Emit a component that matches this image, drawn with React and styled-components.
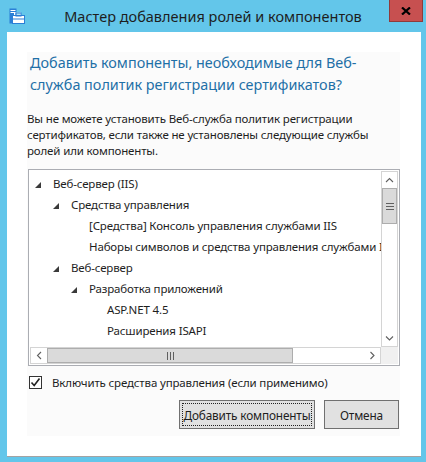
import React from "react";
import styled, { createGlobalStyle } from "styled-components";

const Global = createGlobalStyle`
  html, body { margin: 0; padding: 0; }
  body { background: #63c6ea; font-family: "Noto Sans", "Segoe UI", sans-serif; }
`;

const FONT = `"Noto Sans", "Segoe UI", sans-serif`;

const Window = styled.div`
  width: 426px;
  height: 462px;
  background: #63c6ea;
  display: flex;
  flex-direction: column;
  box-sizing: border-box;
`;

const TitleBar = styled.div`
  height: 32px;
  display: grid;
  grid-template-columns: 1fr auto 1fr;
  align-items: center;
  flex: none;
`;

const TitleIcon = styled.div`
  justify-self: start;
  align-self: start;
  margin: 8px 0 0 9px;
  width: 17px;
  height: 17px;
`;

const TitleText = styled.div`
  font-family: ${FONT};
  font-size: 14.5px;
  color: #1e1e1e;
  white-space: nowrap;
`;

const CloseButton = styled.div`
  justify-self: end;
  align-self: start;
  margin-right: 3px;
  width: 34px;
  height: 22px;
  box-sizing: border-box;
  background: #c75050;
  border: 1px solid #8f3b3b;
  border-top: none;
  display: flex;
  align-items: center;
  justify-content: center;
`;

const Client = styled.div`
  margin: 0 5px 0 7px;
  height: 425px;
  box-sizing: border-box;
  background: #ffffff;
  border-bottom: 1px solid #a3a3a3;
  padding: 20px 21px 0 20px;
  flex: none;
`;

const Panel = styled.div`
  width: 373px;
  height: 384px;
  background: #fbfbfb;
  display: flex;
  flex-direction: column;
  font-family: ${FONT};
  color: #1e1e1e;
  font-size: 11.5px;
  letter-spacing: -0.15px;
`;

const Heading = styled.h1`
  margin: 0;
  padding-left: 3px;
  font-weight: normal;
  font-size: 14.4px;
  letter-spacing: 0;
  line-height: 22px;
  color: #1f70a7;
`;

const Paragraph = styled.p`
  margin: 15px 0 0 0;
  font-size: 11.5px;
  line-height: 16px;
`;

const TreeBox = styled.div`
  margin: 10px 0 0 1px;
  width: 372px;
  height: 197px;
  box-sizing: border-box;
  border: 1px solid #abadb3;
  padding: 1px;
  background: #fff;
  display: grid;
  grid-template-columns: 351px 17px;
  grid-template-rows: 176px 17px;
`;

const TreeContent = styled.div`
  overflow: hidden;
  padding-top: 2px;
  box-sizing: border-box;
`;

const Row = styled.div`
  height: 21px;
  display: flex;
  align-items: center;
  padding-left: ${(p) => 5 + p.$level * 18}px;
  font-size: 11.5px;
  white-space: nowrap;
  color: #1e1e1e;
`;

const Expander = styled.span`
  width: 18px;
  flex: none;
  display: flex;
  align-items: center;
  padding-top: 2px;
`;

const VScroll = styled.div`
  display: flex;
  flex-direction: column;
  border: 1px solid #d4d4d4;
  box-sizing: border-box;
  background: #fff;
`;

const HScroll = styled.div`
  display: flex;
  flex-direction: row;
  border: 1px solid #d4d4d4;
  box-sizing: border-box;
  background: #fff;
`;

const ArrowButton = styled.div`
  flex: none;
  width: ${(p) => (p.$horizontal ? "16px" : "auto")};
  height: ${(p) => (p.$horizontal ? "auto" : "16px")};
  display: flex;
  align-items: center;
  justify-content: center;
`;

const Thumb = styled.div`
  flex: none;
  box-sizing: border-box;
  background: #dadada;
  border: 1px solid #adadad;
  width: ${(p) => (p.$horizontal ? `${p.$size}px` : "auto")};
  height: ${(p) => (p.$horizontal ? "auto" : `${p.$size}px`)};
  display: flex;
  align-items: center;
  justify-content: center;
`;

const Track = styled.div`
  flex: 1;
`;

const Corner = styled.div`
  background: #f0f0f0;
`;

const CheckRow = styled.label`
  margin: 8px 0 0 2px;
  height: 16px;
  display: flex;
  align-items: center;
  gap: 10px;
  font-size: 11.5px;
`;

const CheckBox = styled.span`
  width: 13px;
  height: 13px;
  box-sizing: border-box;
  border: 1px solid #333;
  background: #fff;
  display: flex;
  align-items: center;
  justify-content: center;
`;

const ButtonRow = styled.div`
  margin: 10px 1px 0 0;
  display: flex;
  justify-content: flex-end;
  gap: 9px;
`;

const Button = styled.button`
  height: 29px;
  width: ${(p) => p.$width}px;
  box-sizing: border-box;
  background: #e1e1e1;
  border: 1px solid #707070;
  font-family: ${FONT};
  font-size: 11.8px;
  letter-spacing: -0.15px;
  color: #1e1e1e;
  padding: 0;
  position: relative;
  display: flex;
  align-items: center;
  justify-content: center;
  &::after {
    content: "";
    display: ${(p) => (p.$focused ? "block" : "none")};
    position: absolute;
    inset: 2px;
    border: 1px dotted #222;
  }
`;

const Triangle = () => (
  <svg width="6" height="6" viewBox="0 0 6 6">
    <polygon points="6,0 6,6 0,6" fill="#3a3a3a" />
  </svg>
);

const Chevron = ({ dir }) => {
  const pts = {
    up: "1,5 4.5,1.5 8,5",
    down: "1,1.5 4.5,5 8,1.5",
    left: "5,1 1.5,4.5 5,8",
    right: "1.5,1 5,4.5 1.5,8",
  }[dir];
  const horiz = dir === "left" || dir === "right";
  return (
    <svg width={horiz ? 7 : 9} height={horiz ? 9 : 7} viewBox={horiz ? "0 0 7 9" : "0 0 9 7"}>
      <polyline points={pts} fill="none" stroke="#606060" strokeWidth="1.1" />
    </svg>
  );
};

const Grip = ({ horizontal }) =>
  horizontal ? (
    <svg width="7" height="8" viewBox="0 0 7 8">
      <rect x="0" y="0" width="1" height="8" fill="#606060" />
      <rect x="3" y="0" width="1" height="8" fill="#606060" />
      <rect x="6" y="0" width="1" height="8" fill="#606060" />
    </svg>
  ) : (
    <svg width="8" height="7" viewBox="0 0 8 7">
      <rect x="0" y="0" width="8" height="1" fill="#606060" />
      <rect x="0" y="3" width="8" height="1" fill="#606060" />
      <rect x="0" y="6" width="8" height="1" fill="#606060" />
    </svg>
  );

const AppIcon = () => (
  <svg width="17" height="17" viewBox="0 0 17 17">
    <rect x="0.5" y="0.5" width="7" height="15" fill="#2b7fd6" />
    <rect x="1.5" y="2" width="5" height="1" fill="#ffffff" />
    <rect x="1.5" y="4" width="5" height="1" fill="#ffffff" />
    <rect x="5.5" y="5" width="6" height="2" fill="none" stroke="#ffffff" strokeWidth="1" />
    <rect x="3.5" y="7.5" width="12" height="8" fill="#ffffff" stroke="#2b7fd6" strokeWidth="1" />
    <rect x="7" y="5" width="5" height="3" fill="none" stroke="#2b7fd6" strokeWidth="1" />
    <rect x="4" y="10.5" width="11" height="1" fill="#2b7fd6" />
  </svg>
);

const CloseIcon = () => (
  <svg width="10" height="8" viewBox="0 0 10 8">
    <path d="M1 0.5 L9 7.5 M9 0.5 L1 7.5" stroke="#000" strokeWidth="2.2" />
  </svg>
);

const rows = [
  { level: 0, text: "Веб-сервер (IIS)", open: true },
  { level: 1, text: "Средства управления", open: true },
  { level: 2, text: "[Средства] Консоль управления службами IIS" },
  { level: 2, text: "Наборы символов и средства управления службами IIS" },
  { level: 1, text: "Веб-сервер", open: true },
  { level: 2, text: "Разработка приложений", open: true },
  { level: 3, text: "ASP.NET 4.5" },
  { level: 3, text: "Расширения ISAPI" },
  { level: 3, text: "Фильтры ISAPI" },
];

export default function App() {
  return (
    <>
      <Global />
      <Window>
        <TitleBar>
          <TitleIcon>
            <AppIcon />
          </TitleIcon>
          <TitleText>Мастер добавления ролей и компонентов</TitleText>
          <CloseButton>
            <CloseIcon />
          </CloseButton>
        </TitleBar>
        <Client>
          <Panel>
            <Heading>
              Добавить компоненты, необходимые для Веб-
              <br />
              служба политик регистрации сертификатов?
            </Heading>
            <Paragraph>
              Вы не можете установить Веб-служба политик регистрации
              <br />
              сертификатов, если также не установлены следующие службы
              <br />
              ролей или компоненты.
            </Paragraph>
            <TreeBox>
              <TreeContent>
                {rows.map((r, i) => (
                  <Row key={i} $level={r.level}>
                    <Expander>{r.open ? <Triangle /> : null}</Expander>
                    {r.text}
                  </Row>
                ))}
              </TreeContent>
              <VScroll>
                <ArrowButton>
                  <Chevron dir="up" />
                </ArrowButton>
                <Thumb $size={36}>
                  <Grip />
                </Thumb>
                <Track />
                <ArrowButton>
                  <Chevron dir="down" />
                </ArrowButton>
              </VScroll>
              <HScroll>
                <ArrowButton $horizontal>
                  <Chevron dir="left" />
                </ArrowButton>
                <Thumb $horizontal $size={246}>
                  <Grip horizontal />
                </Thumb>
                <Track />
                <ArrowButton $horizontal>
                  <Chevron dir="right" />
                </ArrowButton>
              </HScroll>
              <Corner />
            </TreeBox>
            <CheckRow>
              <CheckBox>
                <svg width="11" height="11" viewBox="0 0 11 11">
                  <polyline points="1.5,5.5 4.2,8.5 9.5,1.5" fill="none" stroke="#222" strokeWidth="1.6" />
                </svg>
              </CheckBox>
              Включить средства управления (если применимо)
            </CheckRow>
            <ButtonRow>
              <Button $width={136} $focused>
                Добавить компоненты
              </Button>
              <Button $width={75}>Отмена</Button>
            </ButtonRow>
          </Panel>
        </Client>
      </Window>
    </>
  );
}
